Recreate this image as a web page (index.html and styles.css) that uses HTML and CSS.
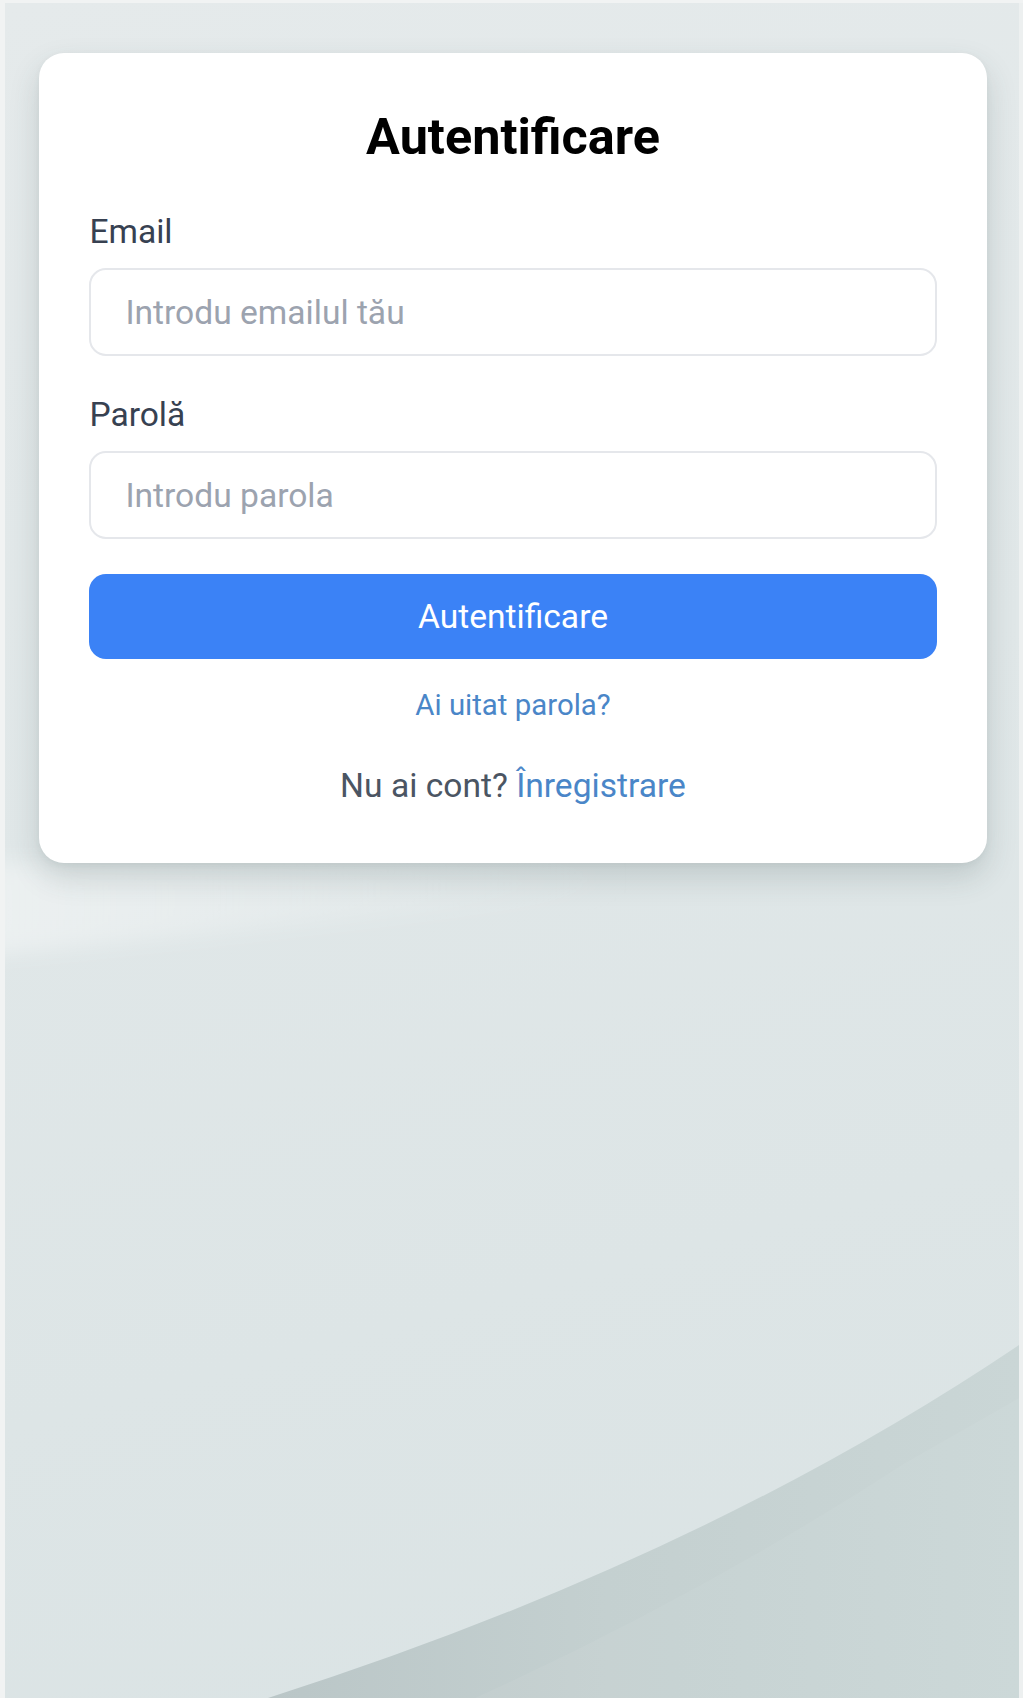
FILE: index.html
```html
<!DOCTYPE html>
<html lang="ro">
<head>
<meta charset="utf-8">
<title>Autentificare</title>
<link rel="stylesheet" href="styles.css">
</head>
<body>
<main class="screen">
  <svg class="backdrop" viewBox="0 0 1014 1695" preserveAspectRatio="none" aria-hidden="true">
    <defs>
      <linearGradient id="dark" x1="0" y1="0" x2="1" y2="0">
        <stop offset="0" stop-color="#bac6c7"/>
        <stop offset="0.45" stop-color="#c4d0d0"/>
        <stop offset="1" stop-color="#cad6d6"/>
      </linearGradient>
      <linearGradient id="glow" x1="0" y1="0" x2="1" y2="0">
        <stop offset="0" stop-color="#ffffff" stop-opacity="0.4"/>
        <stop offset="1" stop-color="#ffffff" stop-opacity="0"/>
      </linearGradient>
      <filter id="soft" x="-20%" y="-50%" width="140%" height="200%">
        <feGaussianBlur stdDeviation="10"/>
      </filter>
    </defs>
    <path d="M-40,860 L620,860 L620,890 L-40,955 Z" fill="url(#glow)" filter="url(#soft)"/>
    <path d="M263,1695 Q695,1557 1014,1342 L1014,1695 Z" fill="url(#dark)"/>
    <path d="M470,1695 Q700,1590 900,1460 L1014,1395 L1014,1695 Z" fill="#ffffff" fill-opacity="0.05"/>
  </svg>
  <div class="card">
    <h1 class="title">Autentificare</h1>
    <form class="form">
      <div class="field">
        <label class="label" for="email">Email</label>
        <input class="input" id="email" type="email" placeholder="Introdu emailul tău">
      </div>
      <div class="field field-last">
        <label class="label" for="parola">Parolă</label>
        <input class="input" id="parola" type="password" placeholder="Introdu parola">
      </div>
      <button class="btn" type="button">Autentificare</button>
    </form>
    <a class="forgot" href="#">Ai uitat parola?</a>
    <p class="signup">Nu ai cont? <a class="link" href="#">Înregistrare</a></p>
  </div>
</main>
</body>
</html>
```

FILE: styles.css
```css
html, body {
  margin: 0;
  padding: 0;
}

body {
  background: #f1f3f3;
  font-family: Roboto, "Liberation Sans", Arial, sans-serif;
}

.screen {
  position: relative;
  box-sizing: border-box;
  margin: 3px 0 0 5px;
  width: 1018px;
  height: 1695px;
  padding: 50px 32px 0 34px;
  border-right: 4px solid #edf0f0;
  background: linear-gradient(165deg, #e5eaeb 0%, #e0e7e8 45%, #dae3e4 100%);
  overflow: hidden;
}

.backdrop {
  position: absolute;
  left: 0;
  top: 0;
  width: 1014px;
  height: 1695px;
  z-index: 0;
}

.card {
  position: relative;
  z-index: 1;
  background: #ffffff;
  border-radius: 25px;
  padding: 50.4px 50.4px 52px;
  box-shadow: 0 14px 30px rgba(50, 70, 72, 0.18), 0 2px 6px rgba(50, 70, 72, 0.05);
}

.title {
  margin: 0 0 37px;
  font-size: 50.4px;
  line-height: 67px;
  font-weight: 700;
  text-align: center;
  color: #000000;
}

.form {
  margin: 0;
}

.field {
  margin-bottom: 34px;
}

.field-last {
  margin-bottom: 35px;
}

.label {
  display: block;
  font-size: 33.6px;
  line-height: 50px;
  color: #374151;
  margin-bottom: 11px;
}

.input {
  display: block;
  box-sizing: border-box;
  width: 100%;
  height: 88px;
  border: 2px solid #e5e7eb;
  border-radius: 17px;
  padding: 0 34px;
  font-family: Roboto, "Liberation Sans", Arial, sans-serif;
  font-size: 33.6px;
  color: #111827;
  background: #ffffff;
  outline: none;
}

.input::placeholder {
  color: #9ca3af;
  opacity: 1;
}

.btn {
  display: block;
  width: 100%;
  height: 85px;
  border: none;
  border-radius: 17px;
  background: #3b82f6;
  color: #ffffff;
  font-family: Roboto, "Liberation Sans", Arial, sans-serif;
  font-size: 33.6px;
  cursor: pointer;
}

.forgot {
  display: block;
  margin-top: 24px;
  font-size: 29.4px;
  line-height: 44px;
  text-align: center;
  color: #4a86c8;
  text-decoration: none;
}

.signup {
  margin: 33.4px 0 0;
  font-size: 33.6px;
  line-height: 50px;
  text-align: center;
  color: #4b5563;
}

.link {
  color: #4a86c8;
  text-decoration: none;
}
```
